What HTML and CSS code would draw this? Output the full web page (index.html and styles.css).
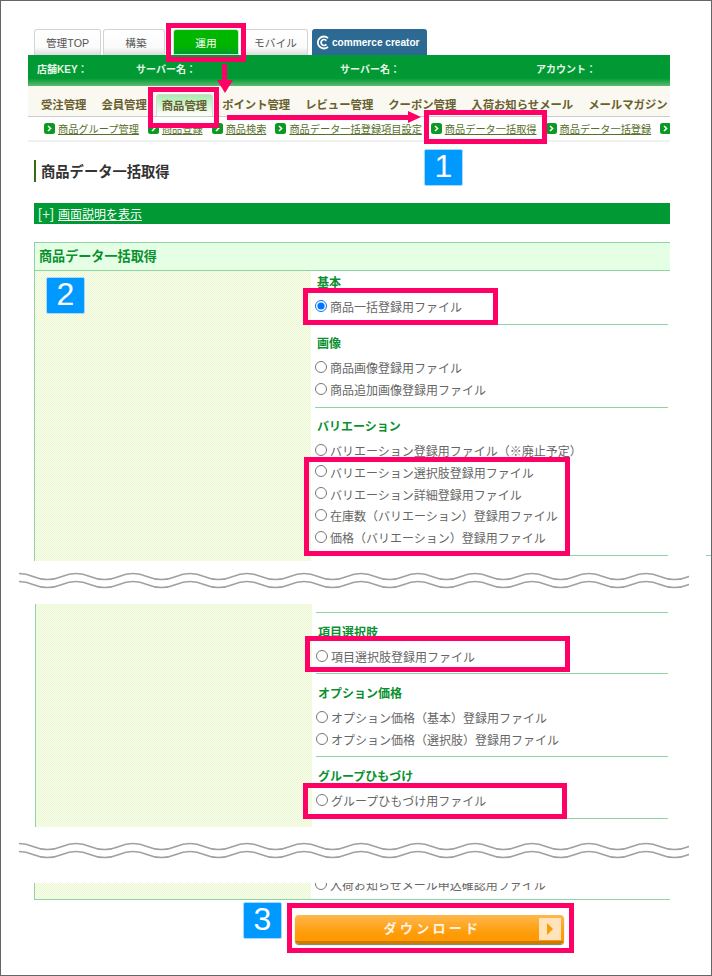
FILE: index.html
```html
<!DOCTYPE html>
<html lang="ja">
<head>
<meta charset="utf-8">
<title>商品データ一括取得</title>
<link rel="stylesheet" href="styles.css">
</head>
<body>
<div class="frame">
  <div class="page">
    <div class="tabs">
      <a class="tab tab-top">管理TOP</a>
      <a class="tab tab-build">構築</a>
      <a class="tab tab-active">運用</a>
      <a class="tab tab-mobile">モバイル</a>
      <a class="tab tab-cc">
        <svg class="cc-logo" viewBox="0 0 14 15" aria-hidden="true"><path d="M12 3.2A6 6 0 1 0 12 11.8" fill="none" stroke="#fff" stroke-width="1.8"/><path d="M10.4 5.6A3 3 0 1 0 10.4 9.4" fill="none" stroke="#fff" stroke-width="1.7"/></svg>
        commerce creator
      </a>
    </div>
    <div class="status">
      <span class="status-item status-key">店舗KEY：</span>
      <span class="status-item status-server">サーバー名：</span>
      <span class="status-item status-server2">サーバー名：</span>
      <span class="status-item">アカウント：</span>
    </div>
    <nav class="nav">
      <a class="nav-item">受注管理</a>
      <a class="nav-item">会員管理</a>
      <a class="nav-item nav-active">商品管理</a>
      <a class="nav-item">ポイント管理</a>
      <a class="nav-item">レビュー管理</a>
      <a class="nav-item">クーポン管理</a>
      <a class="nav-item">入荷お知らせメール</a>
      <a class="nav-item">メールマガジン</a>
    </nav>
    <div class="subnav">
      <span class="sub-item"><svg class="sub-icon" viewBox="0 0 11 11"><rect width="11" height="11" rx="2.5" fill="#0a9a22"/><path d="M4 3l2.6 2.5L4 8" fill="none" stroke="#fff" stroke-width="1.5"/></svg><a>商品グループ管理</a></span>
      <span class="sub-item"><svg class="sub-icon" viewBox="0 0 11 11"><rect width="11" height="11" rx="2.5" fill="#0a9a22"/><path d="M4 3l2.6 2.5L4 8" fill="none" stroke="#fff" stroke-width="1.5"/></svg><a>商品登録</a></span>
      <span class="sub-item"><svg class="sub-icon" viewBox="0 0 11 11"><rect width="11" height="11" rx="2.5" fill="#0a9a22"/><path d="M4 3l2.6 2.5L4 8" fill="none" stroke="#fff" stroke-width="1.5"/></svg><a>商品検索</a></span>
      <span class="sub-item"><svg class="sub-icon" viewBox="0 0 11 11"><rect width="11" height="11" rx="2.5" fill="#0a9a22"/><path d="M4 3l2.6 2.5L4 8" fill="none" stroke="#fff" stroke-width="1.5"/></svg><a>商品データ一括登録項目設定</a></span>
      <span class="sub-item"><svg class="sub-icon" viewBox="0 0 11 11"><rect width="11" height="11" rx="2.5" fill="#0a9a22"/><path d="M4 3l2.6 2.5L4 8" fill="none" stroke="#fff" stroke-width="1.5"/></svg><a>商品データ一括取得</a></span>
      <span class="sub-item"><svg class="sub-icon" viewBox="0 0 11 11"><rect width="11" height="11" rx="2.5" fill="#0a9a22"/><path d="M4 3l2.6 2.5L4 8" fill="none" stroke="#fff" stroke-width="1.5"/></svg><a>商品データ一括登録</a></span>
      <span class="sub-item"><svg class="sub-icon" viewBox="0 0 11 11"><rect width="11" height="11" rx="2.5" fill="#0a9a22"/><path d="M4 3l2.6 2.5L4 8" fill="none" stroke="#fff" stroke-width="1.5"/></svg></span>
    </div>
    <div class="rule"></div>

    <h1 class="title">商品データ一括取得</h1>
    <div class="info"><span class="info-mark">[+]</span><a class="info-link">画面説明を表示</a></div>

    <div class="panel panel-top">
      <h2 class="panel-head">商品データ一括取得</h2>
    </div>
    <div class="segment segment-a">
      <div class="side"></div>
      <div class="fields">
        <section class="group group-first">
          <h3 class="group-title">基本</h3>
          <label class="row"><input type="radio" name="f" checked>商品一括登録用ファイル</label>
        </section>
        <section class="group">
          <h3 class="group-title">画像</h3>
          <label class="row"><input type="radio" name="f">商品画像登録用ファイル</label>
          <label class="row"><input type="radio" name="f">商品追加画像登録用ファイル</label>
        </section>
        <section class="group">
          <h3 class="group-title">バリエーション</h3>
          <label class="row"><input type="radio" name="f">バリエーション登録用ファイル（※廃止予定）</label>
          <label class="row"><input type="radio" name="f">バリエーション選択肢登録用ファイル</label>
          <label class="row"><input type="radio" name="f">バリエーション詳細登録用ファイル</label>
          <label class="row"><input type="radio" name="f">在庫数（バリエーション）登録用ファイル</label>
          <label class="row"><input type="radio" name="f">価格（バリエーション）登録用ファイル</label>
        </section>
      </div>
    </div>

    <div class="break break-a">
      <svg class="wave" width="670" height="17" aria-hidden="true">
        <defs><pattern id="wave-a" width="57" height="17" patternUnits="userSpaceOnUse"><path d="M0 1.5C14 1.5 14 7.5 28.5 7.5S43 1.5 57 1.5M0 9.5C14 9.5 14 15.5 28.5 15.5S43 9.5 57 9.5" fill="none" stroke="#a0a0a0" stroke-width="1.5"/></pattern></defs>
        <rect width="670" height="17" fill="url(#wave-a)"/>
      </svg>
    </div>

    <div class="segment segment-b">
      <div class="side"></div>
      <div class="fields">
        <section class="group group-lined">
          <h3 class="group-title">項目選択肢</h3>
          <label class="row"><input type="radio" name="f">項目選択肢登録用ファイル</label>
        </section>
        <section class="group">
          <h3 class="group-title">オプション価格</h3>
          <label class="row"><input type="radio" name="f">オプション価格（基本）登録用ファイル</label>
          <label class="row"><input type="radio" name="f">オプション価格（選択肢）登録用ファイル</label>
        </section>
        <section class="group">
          <h3 class="group-title">グループひもづけ</h3>
          <label class="row"><input type="radio" name="f">グループひもづけ用ファイル</label>
        </section>
      </div>
    </div>

    <div class="break break-b">
      <svg class="wave" width="670" height="17" aria-hidden="true">
        <defs><pattern id="wave-b" width="57" height="17" patternUnits="userSpaceOnUse"><path d="M0 1.5C14 1.5 14 7.5 28.5 7.5S43 1.5 57 1.5M0 9.5C14 9.5 14 15.5 28.5 15.5S43 9.5 57 9.5" fill="none" stroke="#a0a0a0" stroke-width="1.5"/></pattern></defs>
        <rect width="670" height="17" fill="url(#wave-b)"/>
      </svg>
    </div>

    <div class="segment segment-c">
      <div class="side"></div>
      <div class="fields">
        <label class="row row-cut"><input type="radio" name="f">入荷お知らせメール申込確認用ファイル</label>
      </div>
    </div>

    <button class="download" type="button">
      <span class="download-label">ダウンロード</span>
      <span class="download-arrow"><svg width="6" height="12" viewBox="0 0 6 12" aria-hidden="true"><path d="M0 0l6 6-6 6z" fill="#ff9900"/></svg></span>
    </button>
  </div>

  <span class="mark mark-tab"></span>
  <span class="mark mark-nav"></span>
  <span class="mark mark-sub"></span>
  <span class="mark mark-basic"></span>
  <span class="mark mark-variation"></span>
  <span class="mark mark-option"></span>
  <span class="mark mark-group"></span>
  <span class="mark mark-button"></span>

  <span class="arrow-down-shaft"></span>
  <span class="arrow-down-head"></span>
  <span class="arrow-right-shaft"></span>
  <span class="arrow-right-head"></span>

  <span class="step step-1">1</span>
  <span class="step step-2">2</span>
  <span class="step step-3">3</span>
  <span class="stray-line"></span>
</div>
</body>
</html>
```

FILE: styles.css
```css
* { box-sizing: border-box; }

html, body { margin: 0; padding: 0; background: #fff; }

body {
  font-family: "Liberation Sans", "Noto Sans CJK JP", sans-serif;
  color: #666;
}

a { color: inherit; }

.frame {
  position: relative;
  width: 712px;
  height: 976px;
  overflow: hidden;
  box-shadow: inset 0 0 0 1px #666;
}

.page {
  width: 670px;
  padding: 29px 0 0 28px;
}

/* tabs */
.tabs {
  display: flex;
  gap: 2px;
  height: 26px;
  margin-left: 6px;
}

.tab {
  display: flex;
  align-items: center;
  justify-content: center;
  height: 26px;
  font-size: 10.7px;
  color: #555;
  border: 1px solid #d4d4d4;
  border-bottom: 0;
  border-radius: 3px 3px 0 0;
  background: linear-gradient(#fff 0, #fbfbfb 70%, #dcdcdc 100%);
}

.tab-top { width: 67px; }
.tab-build { width: 62px; padding-left: 4px; }

.tab-active {
  width: 66px;
  margin-left: 6px;
  color: #fff;
  border: 1px solid #cfe8cf;
  background: linear-gradient(#00b800 0, #00b400 70%, #009933 100%);
}

.tab-mobile { width: 67px; padding-left: 2px; }

.tab-cc {
  justify-content: flex-start;
  width: 115px;
  margin-left: 2px;
  padding-left: 4px;
  gap: 2px;
  font-size: 10.1px;
  font-weight: bold;
  color: #fff;
  border: 0;
  background: #2c6a94;
}

.cc-logo { width: 14px; height: 15px; flex: none; }

/* status bar */
.status {
  display: flex;
  align-items: center;
  height: 31px;
  padding: 0 0 4px 9px;
  background: linear-gradient(#009933 0, #009933 75%, #5dbb70 100%);
  font-size: 10px;
  font-weight: bold;
  color: #e6f7e6;
}

.status-item { flex: none; }
.status-key { width: 99px; }
.status-server { width: 204px; }
.status-server2 { width: 196px; }

/* main nav */
.nav {
  display: flex;
  align-items: flex-end;
  gap: 3px;
  height: 31px;
  padding-left: 7px;
  overflow: hidden;
  background: #f9f8f1;
  border-bottom: 1px solid #ccc;
}

.nav-item {
  flex: none;
  height: 22px;
  padding: 0 6px;
  font-size: 11.35px;
  font-weight: bold;
  line-height: 22px;
  color: #6a5f2e;
}

.nav-active {
  padding: 0 5px;
  border: 1px solid #d8d8d8;
  border-bottom: 0;
  border-radius: 3px 3px 0 0;
  background: linear-gradient(#a8ecb0, #fff);
}

/* sub nav */
.subnav {
  display: flex;
  align-items: center;
  gap: 9px;
  height: 23px;
  padding: 0 0 1px 16px;
  overflow: hidden;
}

.sub-item {
  display: flex;
  flex: none;
  align-items: center;
  gap: 3px;
  font-size: 10.2px;
  color: #56702a;
}

.sub-item a { text-decoration: underline; }
.sub-icon { width: 11px; height: 11px; flex: none; }

.rule { height: 2px; background: #f0f0f0; }

/* title */
.title {
  height: 22px;
  margin: 18px 0 0 6px;
  padding-left: 5px;
  border-left: 2px solid #3a6b10;
  font-size: 14.3px;
  font-weight: bold;
  line-height: 25px;
  color: #333;
}

.info {
  display: flex;
  align-items: center;
  gap: 4px;
  height: 21px;
  margin: 21px 0 0 6px;
  padding-left: 4px;
  background: #009933;
  font-size: 12px;
  color: #fff;
}

.info-mark { font-size: 14px; font-weight: normal; color: #d8f2df; }
.info-link { text-decoration: underline; }

/* panel */
.panel-top {
  margin: 18px 0 0 6px;
  border-top: 1px solid #8fd4a4;
  border-left: 1px solid #8fd4a4;
}

.panel-head {
  height: 28px;
  margin: 0;
  padding-left: 4px;
  border-bottom: 1px solid #8fd4a4;
  background: #e5ffe5;
  font-size: 13.1px;
  font-weight: bold;
  line-height: 27px;
  color: #0a9030;
}

.segment {
  display: flex;
  margin-left: 6px;
  overflow: hidden;
  border-left: 1px solid #8fd4a4;
}

.segment-a { height: 290px; }
.segment-b { height: 223px; margin-left: 7px; }

.segment-c {
  height: 17px;
  border-bottom: 1px solid #8fd4a4;
}

.side {
  flex: none;
  width: 276px;
  background: #f0f9da url("data:image/svg+xml,%3Csvg xmlns='http://www.w3.org/2000/svg' width='2' height='2' shape-rendering='crispEdges'%3E%3Crect width='2' height='2' fill='%23fafdf0'/%3E%3Crect width='1' height='1' fill='%23e9f7cf'/%3E%3Crect x='1' y='1' width='1' height='1' fill='%23e9f7cf'/%3E%3C/svg%3E");
}

.fields {
  flex: 1;
  min-width: 0;
  padding: 0 2px 0 4px;
}

.group {
  padding: 9px 0 6px;
  border-bottom: 1px solid #8fd4a4;
}

.segment-a .group { padding: 10px 0 6.25px; }
.segment-a .group-first { padding: 3px 0 6.25px; }
.segment-b .group:last-child { padding-bottom: 7px; }

.group-lined {
  margin-top: 8px;
  border-top: 1px solid #8fd4a4;
}

.group-title {
  height: 18px;
  margin: 0 0 4px;
  padding-left: 2px;
  font-size: 12px;
  font-weight: bold;
  line-height: 18px;
  color: #0a9030;
}

.segment-b .group-title { height: 20px; margin-bottom: 3px; line-height: 22px; }

.row {
  display: flex;
  align-items: center;
  gap: 3px;
  height: 22px;
  font-size: 12px;
  color: #666;
}

.segment-a .row { height: 21.75px; }

.row input {
  flex: none;
  width: 12px;
  height: 12px;
  margin: -1px 0 0;
  accent-color: #0075ff;
}

.segment-a .row input { margin-top: -2px; }

.row-cut { margin-top: -10px; }

/* breaks */
.break { overflow: visible; }
.break-a { height: 43px; padding-top: 11px; }
.break-b { height: 56px; padding-top: 15px; }

.wave {
  display: block;
  margin-left: -9px;
}

/* download */
.download {
  position: relative;
  display: flex;
  align-items: center;
  justify-content: center;
  width: 269px;
  height: 29px;
  margin: 15px 0 0 267px;
  padding: 0 0 4px 6px;
  border: 0;
  border-radius: 4px;
  background: linear-gradient(#ffb84d 0, #ff9c0a 60%, #ff9900 88%, #cc7a00 90%, #cc7a00 100%);
  box-shadow: 0 1px 1px #8a7a66;
  font-family: inherit;
}

.download-label {
  font-size: 13px;
  font-weight: bold;
  letter-spacing: 3.3px;
  color: #fff4e4;
}

.download-arrow {
  position: absolute;
  top: 3px;
  right: 3px;
  display: flex;
  align-items: center;
  justify-content: center;
  width: 22px;
  height: 22px;
  background: #ffe3bb;
}

/* annotations */
.mark {
  position: absolute;
  border: 5px solid #ff0066;
}

.mark-tab { left: 166px; top: 23px; width: 80px; height: 39px; }
.mark-nav { left: 148px; top: 87px; width: 71px; height: 41px; }
.mark-sub { left: 424px; top: 110px; width: 123px; height: 34px; }
.mark-basic { left: 303px; top: 288px; width: 195px; height: 37px; }
.mark-variation { left: 304px; top: 457px; width: 266px; height: 99px; }
.mark-option { left: 305px; top: 636px; width: 265px; height: 36px; }
.mark-group { left: 303px; top: 783px; width: 264px; height: 36px; }
.mark-button { left: 287px; top: 903px; width: 287px; height: 50px; }

.arrow-down-shaft {
  position: absolute;
  left: 222px;
  top: 64px;
  width: 5px;
  height: 17px;
  background: #ff0066;
}

.arrow-down-head {
  position: absolute;
  left: 217px;
  top: 80px;
  border-top: 13px solid #ff0066;
  border-left: 8px solid transparent;
  border-right: 8px solid transparent;
}

.arrow-right-shaft {
  position: absolute;
  left: 227px;
  top: 115px;
  width: 182px;
  height: 5px;
  background: #ff0066;
}

.arrow-right-head {
  position: absolute;
  left: 408px;
  top: 111px;
  border-left: 13px solid #ff0066;
  border-top: 6.5px solid transparent;
  border-bottom: 6.5px solid transparent;
}

.step {
  position: absolute;
  display: flex;
  align-items: center;
  justify-content: center;
  width: 39px;
  height: 37px;
  padding-bottom: 2px;
  border: 1px solid #a8d8ff;
  border-radius: 2px;
  background: #0099ff;
  font-family: "Liberation Sans", sans-serif;
  font-size: 32px;
  color: #fff;
}

.step-1 { left: 424px; top: 149px; }
.step-2 { left: 46px; top: 277px; }
.step-3 { left: 243px; top: 902px; }

.stray-line {
  position: absolute;
  left: 706px;
  top: 555px;
  width: 5px;
  height: 1px;
  background: #8fd4a4;
}
```
